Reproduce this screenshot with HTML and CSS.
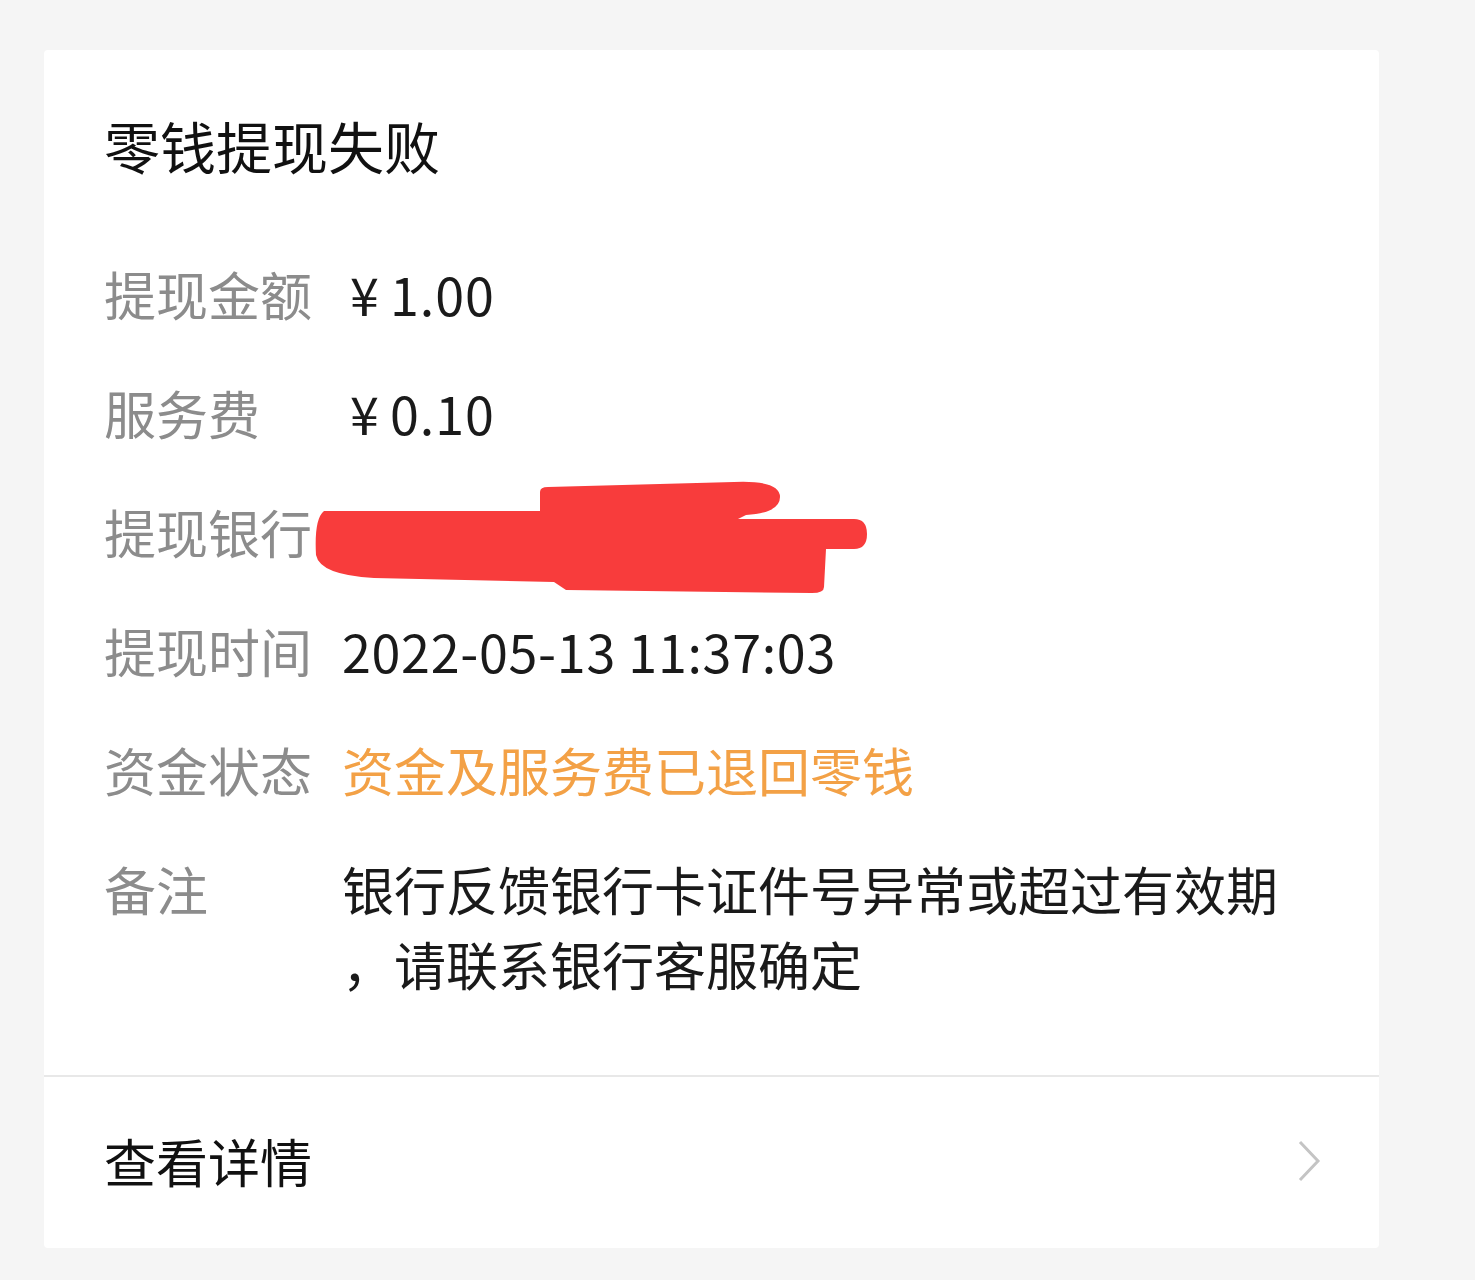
FILE: index.html
```html
<!DOCTYPE html>
<html lang="zh-CN">
<head>
<meta charset="utf-8">
<title>零钱提现失败</title>
<link rel="stylesheet" href="styles.css">
</head>
<body>
<div class="page">
  <div class="card">
    <div class="card-body">
      <h1 class="title">零钱提现失败</h1>
      <div class="rows">
        <div class="row">
          <div class="label">提现金额</div>
          <div class="value money"><span class="yen">¥</span>1.00</div>
        </div>
        <div class="row">
          <div class="label">服务费</div>
          <div class="value money"><span class="yen">¥</span>0.10</div>
        </div>
        <div class="row">
          <div class="label">提现银行</div>
          <div class="value masked">
            <svg class="scribble" width="556" height="118" viewBox="0 0 556 118" aria-hidden="true">
              <path d="M10,32 L226,32 L226,13 Q226,8 234,8 L420,3 Q466,1 466,18 Q466,34 432,36 L424,40 L540,40 Q553,40 553,55 Q553,70 540,70 L512,70 L510,108 Q510,114 498,114 L252,111 L240,103 L60,99 Q6,96 2,76 Q0,40 10,32 Z" fill="#f83c3c"/>
            </svg>
          </div>
        </div>
        <div class="row">
          <div class="label">提现时间</div>
          <div class="value time">2022-05-13 11:37:03</div>
        </div>
        <div class="row">
          <div class="label">资金状态</div>
          <div class="value status">资金及服务费已退回零钱</div>
        </div>
        <div class="row">
          <div class="label">备注</div>
          <div class="value remark">银行反馈银行卡证件号异常或超过有效期，请联系银行客服确定</div>
        </div>
      </div>
    </div>
    <div class="card-footer">
      <span class="footer-text">查看详情</span>
      <svg class="chevron" width="24" height="42" viewBox="0 0 24 42" aria-hidden="true">
        <path d="M3,2 L21,21 L3,40" fill="none" stroke="#c4c4c4" stroke-width="3"/>
      </svg>
    </div>
  </div>
</div>
</body>
</html>
```

FILE: styles.css
```css
html, body {
  margin: 0;
  padding: 0;
  background: #f5f5f5;
}

body {
  font-family: "Noto Sans CJK SC", "Microsoft YaHei", "Noto Sans", sans-serif;
}

.page {
  padding: 50px 0 33px 44px;
}

.card {
  width: 1335px;
  background: #ffffff;
  border-radius: 4px;
}

.card-body {
  padding: 61px 60px 74px 60px;
}

.title {
  margin: 0;
  font-size: 56px;
  font-weight: 400;
  line-height: 68px;
  color: #111111;
}

.rows {
  margin-top: 77px;
  display: flex;
  flex-direction: column;
  gap: 44px;
}

.row {
  display: flex;
  align-items: flex-start;
  font-size: 52px;
  line-height: 75px;
}

.label {
  width: 238px;
  flex: none;
  color: #8c8c8c;
}

.value {
  flex: 1;
  color: #1a1a1a;
}

.money {
  padding-left: 8px;
  letter-spacing: 1px;
}

.yen {
  margin-right: 10px;
}

.time {
  letter-spacing: 0.7px;
}

.masked {
  position: relative;
  min-height: 75px;
}

.scribble {
  position: absolute;
  left: -28px;
  top: -15px;
}

.status {
  color: #f3a146;
}

.remark {
  line-break: anywhere;
}

.card-footer {
  border-top: 2px solid #e8e8e8;
  height: 171px;
  display: flex;
  align-items: center;
  justify-content: space-between;
  padding: 0 58px 0 60px;
}

.footer-text {
  font-size: 52px;
  line-height: 75px;
  color: #111111;
  margin-top: -4px;
}

.chevron {
  display: block;
  margin-top: -4px;
}
```
